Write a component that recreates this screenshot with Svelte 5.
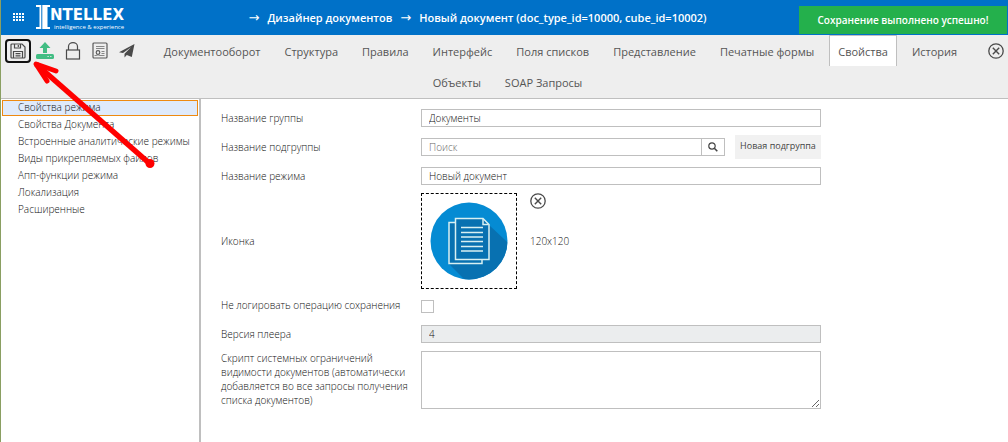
<script>
  const tabs = [
    "Документооборот",
    "Структура",
    "Правила",
    "Интерфейс",
    "Поля списков",
    "Представление",
    "Печатные формы",
    "Свойства",
    "История",
    "Объекты",
    "SOAP Запросы"
  ];
  const sections = [
    "Свойства режима",
    "Свойства Документа",
    "Встроенные аналитические режимы",
    "Виды прикрепляемых файлов",
    "Апп-функции режима",
    "Локализация",
    "Расширенные"
  ];

  let activeTab = $state("Свойства");
  let activeSection = $state("Свойства режима");
  let groupName = $state("Документы");
  let subgroup = $state("");
  let modeName = $state("Новый документ");
  let noLog = $state(false);
  let script = $state("");
</script>

{#snippet closeIcon()}
  <svg width="16" height="16" viewBox="0 0 16 16" fill="none" stroke="#4a4a4a">
    <circle cx="8" cy="8" r="7.2" stroke-width="1.3" />
    <path d="M4.8 4.8l6.4 6.4M11.2 4.8l-6.4 6.4" stroke-width="1.4" />
  </svg>
{/snippet}

<div class="app">
  <header>
    <button class="plain" aria-label="Меню">
      <svg width="11" height="9" viewBox="0 0 11 9" fill="#fff">
        {#each [0, 3, 6] as y (y)}
          {#each [0, 3, 6, 9] as x (x)}
            <rect {x} {y} width="2" height="2" />
          {/each}
        {/each}
      </svg>
    </button>
    <a class="logo" href="#home">
      <svg width="14" height="24" viewBox="0 0 14 24" fill="#fff">
        <path d="M0 0h5.3v24H0v-2h3.500V2H0z" />
        <path d="M6.300 0H14v2h-2.500v20H14V24H6.300z" />
      </svg>
      <span class="words">
        <span class="name">NTELLEX</span>
        <span class="motto">intelligence &amp; experience</span>
      </span>
    </a>
    <nav class="crumbs">
      <span class="arr">→</span>
      <a href="#designer">Дизайнер документов</a>
      <span class="arr">→</span>
      <a href="#doc">Новый документ (doc_type_id=10000, cube_id=10002)</a>
    </nav>
    <div class="toast" role="status">Сохранение выполнено успешно!</div>
  </header>

  <div class="toolbar">
    <div class="tools">
      <button class="plain save" aria-label="Сохранить">
        <svg width="16" height="16" viewBox="0 0 16 16" fill="none" stroke="#4a4a4a" stroke-width="1.2">
          <path d="M1 2q0-1 1-1h10l3 3v10q0 1-1 1H2q-1 0-1-1z" />
          <path d="M4.500 1v4h6V1M8.300 2v2M3.500 15V8.500h9V15M5.500 10.700h5M5.500 12.800h5" />
        </svg>
      </button>
      <button class="plain" aria-label="Загрузить">
        <svg width="18" height="18" viewBox="0 0 18 18" fill="#41bd83">
          <path d="M9 0l5.500 6H11v5H7V6H3.500z" />
          <rect x="0" y="12" width="18" height="5" rx="1.5" />
          <path d="M11.500 14.500h1.200M14.200 14.500h1.200" stroke="#eee" stroke-width="1.2" />
        </svg>
      </button>
      <button class="plain" aria-label="Блокировка">
        <svg width="16" height="18" viewBox="0 0 16 18" fill="none" stroke="#4a4a4a" stroke-width="1.2">
          <rect x="1.500" y="8" width="13" height="9" />
          <path d="M3.500 8V4.500a4.500 3.800 0 0 1 9 0V8" />
        </svg>
      </button>
      <button class="plain" aria-label="Сертификат">
        <svg width="16" height="18" viewBox="0 0 16 18" fill="none" stroke="#5a5a5a">
          <rect x="1" y="1" width="14" height="15" rx="1" stroke-width="1.2" />
          <path d="M4 4.500h8.500M4 6.500h8.500M9.500 9.500h3M9.500 11.500h3M2.500 13.500h2M7.500 13.500h5" stroke-width="0.7" />
          <circle cx="6" cy="10.500" r="1.800" stroke-width="1.200" />
          <path d="M5 12.500v1.500M7 12.500v1.500" stroke-width="0.8" />
        </svg>
      </button>
      <button class="plain" aria-label="Отправить">
        <svg width="16" height="15" viewBox="0 0 16 15" fill="#4a4a4a">
          <path d="M15.500 1L0 9.300l4 .8L12 4.200 5.500 10.800V14.500l2.300-2.500 5 2z" />
        </svg>
      </button>
    </div>
    <button class="plain close" aria-label="Закрыть">{@render closeIcon()}</button>
    <nav class="tabs">
      {#each tabs as tab (tab)}
        <button class:active={tab === activeTab} onclick={() => (activeTab = tab)}>{tab}</button>
      {/each}
    </nav>
  </div>

  <div class="body">
    <ul class="side">
      {#each sections as s (s)}
        <li>
          <button class:active={s === activeSection} onclick={() => (activeSection = s)}>{s}</button>
        </li>
      {/each}
    </ul>

    <form class="props">
      <label for="group">Название группы</label>
      <input id="group" class="field" type="text" bind:value={groupName} />

      <label for="subgroup">Название подгруппы</label>
      <div class="searchrow">
        <input id="subgroup" class="field" type="text" placeholder="Поиск" bind:value={subgroup} />
        <button type="button" class="find" aria-label="Найти">
          <svg width="10" height="10" viewBox="0 0 10 10" fill="none" stroke="#444">
            <circle cx="4" cy="4" r="3.2" stroke-width="1.2" />
            <path d="M6.300 6.300L9.300 9.300" stroke-width="1.6" />
          </svg>
        </button>
        <button type="button" class="new">Новая подгруппа</button>
      </div>

      <label for="mode">Название режима</label>
      <input id="mode" class="field" type="text" bind:value={modeName} />

      <span>Иконка</span>
      <div class="iconrow">
        <div class="preview">
          <svg width="78" height="78" viewBox="0 0 78 78">
            <defs>
              <clipPath id="disc"><circle cx="39" cy="39" r="38.5" /></clipPath>
            </defs>
            <circle cx="39" cy="39" r="38.5" fill="#058bd3" />
            <path clip-path="url(#disc)" d="M18 61L52 17l7 6 30 28v40H48z" fill="#0871b1" />
            <g stroke="#d8f0f2" stroke-width="1.5" fill="#0871b1">
              <path d="M25 20.500h-6V61.500H52V57" />
              <path d="M25.500 16.500H53l6 6V57.500H25.500z" />
              <path d="M53 17v5.500h5.500" fill="none" />
            </g>
            <path d="M31 25.500h22M31 30.500h22M31 35h22M31 39.500h22M31 44.500h22M31 49h22" stroke="#d8f0f2" stroke-width="1.5" />
          </svg>
        </div>
        <div class="iconinfo">
          <button type="button" class="plain" aria-label="Удалить иконку">{@render closeIcon()}</button>
          <span>120x120</span>
        </div>
      </div>

      <label class="check" for="nolog">Не логировать операцию сохранения</label>
      <input id="nolog" type="checkbox" bind:checked={noLog} />

      <label for="player">Версия плеера</label>
      <input id="player" class="field" type="text" value="4" readonly />

      <label class="top" for="script">Скрипт системных ограничений видимости документов (автоматически добавляется во все запросы получения списка документов)</label>
      <textarea id="script" class="field" bind:value={script}></textarea>
    </form>
  </div>

  <svg class="pointer" width="130" height="112" viewBox="0 0 130 112" stroke="#f00" fill="none">
    <path d="M6 4L119 103" stroke-width="5.500" />
    <path d="M26 11L6 4l11 17" stroke-width="5" stroke-linejoin="round" stroke-linecap="round" />
    <circle cx="120" cy="103.500" r="4.500" fill="#f00" stroke="none" />
  </svg>
</div>

<style>
  :global(body) {
    background: #fff;
  }
  .app {
    position: relative;
    min-height: 100vh;
    box-sizing: border-box;
    border-left: 1px solid #8a9f62;
    display: flex;
    flex-direction: column;
    font-family: "Open Sans", sans-serif;
    font-size: 10px;
    font-weight: 300;
    color: #111;
  }
  button,
  input,
  textarea {
    font: inherit;
    color: inherit;
    margin: 0;
    box-sizing: border-box;
  }
  svg {
    display: block;
  }
  .plain {
    border: 0;
    padding: 0;
    background: none;
  }

  header {
    display: flex;
    align-items: center;
    height: 35px;
    padding-left: 12px;
    background: #0071c8;
    color: #fff;
  }
  .logo {
    display: flex;
    margin-left: 12px;
    color: #fff;
    text-decoration: none;
  }
  .words {
    display: flex;
    flex-direction: column;
    padding-top: 2px;
  }
  .name {
    font-family: "DejaVu Sans", sans-serif;
    font-size: 15px;
    font-weight: 700;
    line-height: 17px;
  }
  .motto {
    margin-left: 4px;
    font-size: 6px;
    font-weight: 400;
    line-height: 6px;
  }
  .crumbs {
    flex: 1;
    display: flex;
    align-items: center;
    justify-content: center;
    gap: 8px;
    padding-left: 32px;
    font-size: 11px;
    font-weight: 600;
    line-height: 16px;
    white-space: nowrap;
  }
  .arr {
    font-family: "DejaVu Sans", sans-serif;
    font-size: 13px;
    font-weight: 400;
  }
  .crumbs a {
    color: #fff;
    text-decoration: none;
  }
  .toast {
    align-self: flex-end;
    width: 208px;
    margin: 0 1px 1px 0;
    line-height: 28px;
    background: #24b04c;
    font-weight: 600;
    text-align: center;
    white-space: nowrap;
  }

  .toolbar {
    padding-bottom: 1px;
    background: #eee;
    border-bottom: 1px solid #bfbfbf;
  }
  .tools {
    float: left;
    display: flex;
    align-items: center;
    gap: 11px;
    height: 31px;
    padding: 0 4px;
  }
  .save {
    padding: 2px 3px;
    border: 2px solid #111;
    border-radius: 4px;
    margin-right: -6px;
  }
  .close {
    float: right;
    padding: 8px 4px 4px 0;
  }
  .tabs {
    padding-left: 12px;
    text-align: center;
    font-size: 0;
  }
  .tabs button {
    height: 31px;
    margin-right: 6px;
    padding: 0 8px;
    border: 1px solid transparent;
    border-bottom: 0;
    background: none;
    font-size: 11px;
    font-weight: 400;
    color: #555;
    vertical-align: top;
  }
  .tabs .active {
    background: #fff;
    border-color: #bfbfbf;
  }

  .body {
    flex: 1;
    display: flex;
  }
  .side {
    flex: none;
    display: flex;
    flex-direction: column;
    gap: 1px;
    width: 200px;
    margin: 0;
    padding: 1px 1px 0;
    box-sizing: border-box;
    border-right: 2px solid #bfbfbf;
    list-style: none;
  }
  .side button {
    display: block;
    width: 100%;
    height: 16px;
    padding: 0 0 2px 15px;
    border: 1px solid transparent;
    background: none;
    line-height: 12px;
    text-align: left;
    white-space: nowrap;
  }
  .side .active {
    border-color: #ee8a11;
    background: #dfeafb;
  }

  .props {
    flex: 1;
    display: grid;
    grid-template-columns: 190px minmax(0, 400px);
    gap: 8px 10px;
    align-items: center;
    align-content: start;
    padding: 10px 20px;
    line-height: 14px;
  }
  .field {
    width: 100%;
    height: 18px;
    padding: 0 7px;
    border: 1px solid #bfbfbf;
    border-radius: 0;
    background: #fff;
    outline: 0;
  }
  .field::placeholder {
    color: #666;
    opacity: 1;
  }
  .field[readonly] {
    background: #ebedee;
  }
  .searchrow {
    display: flex;
    align-items: center;
  }
  .searchrow .field {
    flex: 1;
    width: auto;
  }
  .find {
    display: flex;
    align-items: center;
    justify-content: center;
    width: 24px;
    height: 18px;
    margin-left: -1px;
    padding: 0;
    border: 1px solid #bfbfbf;
    background: #fff;
  }
  .new {
    width: 86px;
    height: 24px;
    margin-left: 10px;
    padding: 0 0 2px;
    border: 0;
    background: #f1f1f1;
    color: #444;
    font-size: 9px;
    font-weight: 400;
    white-space: nowrap;
  }
  .iconrow {
    display: flex;
    gap: 13px;
  }
  .preview {
    padding: 8px;
    border: 1px dashed #000;
  }
  .iconinfo {
    display: flex;
    flex-direction: column;
    align-items: flex-start;
    gap: 25px;
  }
  .check {
    padding-bottom: 4px;
  }
  [type="checkbox"] {
    appearance: none;
    width: 13px;
    height: 13px;
    margin: 3px 0 4px;
    border: 1px solid #bfbfbf;
    background: #fff;
  }
  [type="checkbox"]:checked {
    background: #0071c8;
  }
  .top {
    align-self: start;
  }
  textarea.field {
    height: 58px;
    padding: 4px 7px;
    resize: both;
  }

  .pointer {
    position: absolute;
    left: 29px;
    top: 60px;
    pointer-events: none;
  }
</style>
